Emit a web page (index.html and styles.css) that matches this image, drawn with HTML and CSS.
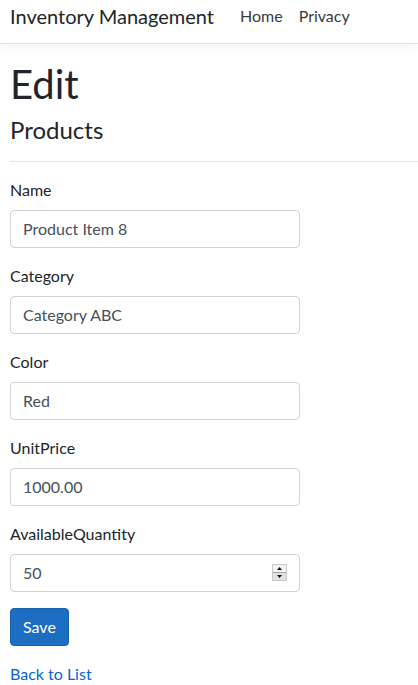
FILE: index.html
```html
<!DOCTYPE html>
<html lang="en">
<head>
<meta charset="utf-8">
<title>Edit - Inventory Management</title>
<link rel="stylesheet" href="styles.css">
</head>
<body>
<header class="navbar">
  <a class="brand" href="#">Inventory Management</a>
  <nav class="nav">
    <a class="nav-link" href="#">Home</a>
    <a class="nav-link" href="#">Privacy</a>
  </nav>
</header>
<main class="container">
  <h1 class="title">Edit</h1>
  <h4 class="subtitle">Products</h4>
  <hr class="rule">
  <form class="form">
    <div class="form-group">
      <label class="label">Name</label>
      <input class="control" type="text" value="Product Item 8">
    </div>
    <div class="form-group">
      <label class="label">Category</label>
      <input class="control" type="text" value="Category ABC">
    </div>
    <div class="form-group">
      <label class="label">Color</label>
      <input class="control" type="text" value="Red">
    </div>
    <div class="form-group">
      <label class="label">UnitPrice</label>
      <input class="control" type="text" value="1000.00">
    </div>
    <div class="form-group">
      <label class="label">AvailableQuantity</label>
      <div class="number-wrap">
        <input class="control" type="number" value="50">
        <svg class="spinner" width="15" height="17" viewBox="0 0 15 17" aria-hidden="true">
          <rect x="0.5" y="0.5" width="14" height="16" fill="#ececec" stroke="#c9c9c9"/>
          <line x1="1" y1="8.5" x2="14" y2="8.5" stroke="#a8a8a8"/>
          <rect x="1" y="1" width="13" height="7" fill="#f3f3f3"/>
          <rect x="1" y="9" width="13" height="7" fill="#e2e2e2"/>
          <polygon points="5,6 10,6 7.5,3" fill="#111"/>
          <polygon points="5,11 10,11 7.5,14" fill="#111"/>
        </svg>
      </div>
    </div>
    <div class="form-group">
      <button class="btn" type="button">Save</button>
    </div>
  </form>
  <div class="back"><a class="link" href="#">Back to List</a></div>
</main>
</body>
</html>
```
FILE: styles.css
```css
html { font-size: 16px; }
body {
  margin: 0;
  font-family: "Segoe UI", "Lato", sans-serif;
  font-size: 1rem;
  line-height: 1.5;
  color: #212529;
  background: #fff;
}
a { text-decoration: none; }
.navbar {
  display: flex;
  align-items: flex-start;
  height: 44px;
  padding: 1px 10px 0;
  border-bottom: 1px solid #dee2e6;
  box-shadow: 0 .25rem .75rem rgba(0,0,0,.05);
  margin-bottom: 16px;
  box-sizing: border-box;
}
.brand {
  font-size: 1.25rem;
  line-height: 30px;
  color: #212529;
  margin-right: 18px;
  white-space: nowrap;
}
.nav { display: flex; padding-top: 1px; }
.nav-link {
  color: #343a40;
  padding: 0 .5rem;
  font-size: 1rem;
  line-height: 28px;
}
.container { padding: 0 10px; }
.title {
  font-size: 2.5rem;
  font-weight: 400;
  line-height: 1.2;
  margin: 0 0 .5rem;
}
.subtitle {
  font-size: 1.5rem;
  font-weight: 400;
  line-height: 1.2;
  margin: 0 0 .5rem;
}
.rule {
  margin: 1rem -10px 1rem 0;
  border: 0;
  border-top: 1px solid rgba(0,0,0,.1);
}
.form { width: 290px; }
.form-group { margin-bottom: 1rem; }
.label { display: inline-block; margin-bottom: .5rem; }
.control {
  display: block;
  width: 100%;
  height: 38px;
  box-sizing: border-box;
  padding: .375rem .75rem;
  font-family: inherit;
  font-size: 1rem;
  line-height: 1.5;
  color: #495057;
  background: #fff;
  border: 1px solid #ced4da;
  border-radius: .25rem;
}
.control::-webkit-inner-spin-button,
.control::-webkit-outer-spin-button { -webkit-appearance: none; margin: 0; }
.number-wrap { position: relative; }
.spinner { position: absolute; top: 10px; right: 13px; display: block; }
.btn {
  font-family: inherit;
  font-size: 1rem;
  line-height: 1.5;
  padding: .375rem .75rem;
  color: #fff;
  background: #1b6ec2;
  border: 1px solid #1861ac;
  border-radius: .25rem;
  height: 38px;
}
.link { color: #0366d6; }
```
